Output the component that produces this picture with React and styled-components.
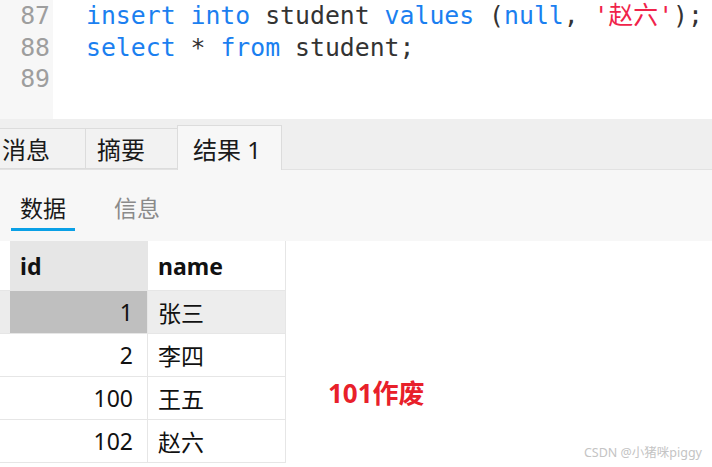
import React from 'react';
import styled, { createGlobalStyle } from 'styled-components';

const GlobalStyle = createGlobalStyle`
    html, body {
        margin: 0;
        padding: 0;
        background: #ffffff;
        overflow: hidden;
    }
    body {
        font-family: "Noto Sans", "Noto Sans CJK SC", sans-serif;
    }
`;

const Page = styled.div`
    position: relative;
    width: 712px;
    height: 467px;
    overflow: hidden;
    display: flex;
    flex-direction: column;
`;

const Editor = styled.div`
    display: flex;
    height: 119px;
    flex-shrink: 0;
    font-family: "DejaVu Sans Mono", "Noto Sans CJK SC", monospace;
    font-size: 24.8px;
    line-height: 31.5px;
`;

const Gutter = styled.div`
    width: 53px;
    background: #f7f7f7;
    color: #9e9e9e;
    text-align: right;
    padding-right: 3px;
    box-sizing: border-box;
`;

const Code = styled.div`
    flex: 1;
    background: #ffffff;
    padding-left: 33px;
    color: #333333;
    white-space: pre;
`;

const Kw = styled.span`
    color: #1b7ff0;
`;

const Str = styled.span`
    color: #f0234a;
`;

const TabBar = styled.div`
    height: 51px;
    flex-shrink: 0;
    background: #efefef;
    display: flex;
    align-items: flex-end;
    border-bottom: 1px solid #e2e2e2;
    box-sizing: border-box;
`;

const Tab = styled.div`
    box-sizing: border-box;
    width: ${p => p.w}px;
    height: ${p => (p.active ? 45 : 41)}px;
    margin-bottom: ${p => (p.active ? -1 : 0)}px;
    background: ${p => (p.active ? '#f7f7f7' : '#f2f2f2')};
    border: 1px solid #dcdcdc;
    border-bottom: ${p => (p.active ? 'none' : '1px solid #dcdcdc')};
    border-left: ${p => (p.first ? 'none' : '1px solid #dcdcdc')};
    margin-left: ${p => (p.first ? 0 : -1)}px;
    padding-left: ${p => p.pl}px;
    display: flex;
    align-items: center;
    font-size: 24px;
    color: #1a1a1a;
`;

const SubBar = styled.div`
    height: 71px;
    flex-shrink: 0;
    background: #f7f7f7;
    display: flex;
    align-items: flex-start;
    padding: 22px 0 0 11px;
    box-sizing: border-box;
    gap: 30px;
`;

const SubTab = styled.div`
    width: 64px;
    text-align: center;
    font-size: 23px;
    line-height: 32px;
    padding-bottom: 4px;
    color: ${p => (p.active ? '#1a1a1a' : '#8a8a8a')};
    border-bottom: 3px solid ${p => (p.active ? '#0aa0e6' : 'transparent')};
`;

const ResultArea = styled.div`
    flex: 1;
    background: #ffffff;
    display: flex;
    align-items: flex-start;
`;

const Grid = styled.div`
    display: grid;
    grid-template-columns: 10px 138px 138px;
    grid-template-rows: 50px repeat(4, 43px);
`;

const Cell = styled.div`
    box-sizing: border-box;
    border-right: 1px solid ${p => (p.edge ? '#d9d9d9' : '#e6e6e6')};
    border-bottom: 1px solid #e6e6e6;
    background: ${p => p.bg || '#ffffff'};
    display: flex;
    align-items: center;
    justify-content: ${p => (p.num ? 'flex-end' : 'flex-start')};
    padding: ${p => (p.num ? '0 14px 0 0' : '0 0 0 10px')};
    font-size: 23px;
    font-weight: ${p => (p.head ? 700 : 400)};
    color: #111111;
`;

const Note = styled.div`
    margin: 136px 0 0 42px;
    font-size: 26px;
    line-height: 32px;
    font-weight: 700;
    color: #e8202a;
`;

const Watermark = styled.div`
    position: absolute;
    right: 10px;
    bottom: 6px;
    font-size: 12.5px;
    color: #c4c4c4;
`;

const rows = [
    { id: 1, name: '张三', selected: true },
    { id: 2, name: '李四' },
    { id: 100, name: '王五' },
    { id: 102, name: '赵六' },
];

const App = () => {
    return (
        <Page>
            <GlobalStyle />
            <Editor>
                <Gutter>
                    <div>87</div>
                    <div>88</div>
                    <div>89</div>
                </Gutter>
                <Code>
                    <div>
                        <Kw>insert</Kw> <Kw>into</Kw> student <Kw>values</Kw> (<Kw>null</Kw>, <Str>'赵六'</Str>);
                    </div>
                    <div>
                        <Kw>select</Kw> * <Kw>from</Kw> student;
                    </div>
                    <div> </div>
                </Code>
            </Editor>
            <TabBar>
                <Tab first w={86} pl={2}>消息</Tab>
                <Tab w={93} pl={11}>摘要</Tab>
                <Tab active w={105} pl={15}>结果 1</Tab>
            </TabBar>
            <SubBar>
                <SubTab active>数据</SubTab>
                <SubTab>信息</SubTab>
            </SubBar>
            <ResultArea>
                <Grid>
                    <Cell edge />
                    <Cell head bg="#e6e6e6">id</Cell>
                    <Cell head>name</Cell>
                    {rows.map(r => (
                        <React.Fragment key={r.id}>
                            <Cell edge bg={r.selected ? '#ececec' : undefined} />
                            <Cell num bg={r.selected ? '#bfbfbf' : undefined}>{r.id}</Cell>
                            <Cell bg={r.selected ? '#ededed' : undefined}>{r.name}</Cell>
                        </React.Fragment>
                    ))}
                </Grid>
                <Note>101作废</Note>
            </ResultArea>
            <Watermark>CSDN @小猪咪piggy</Watermark>
        </Page>
    );
};

export default App;
